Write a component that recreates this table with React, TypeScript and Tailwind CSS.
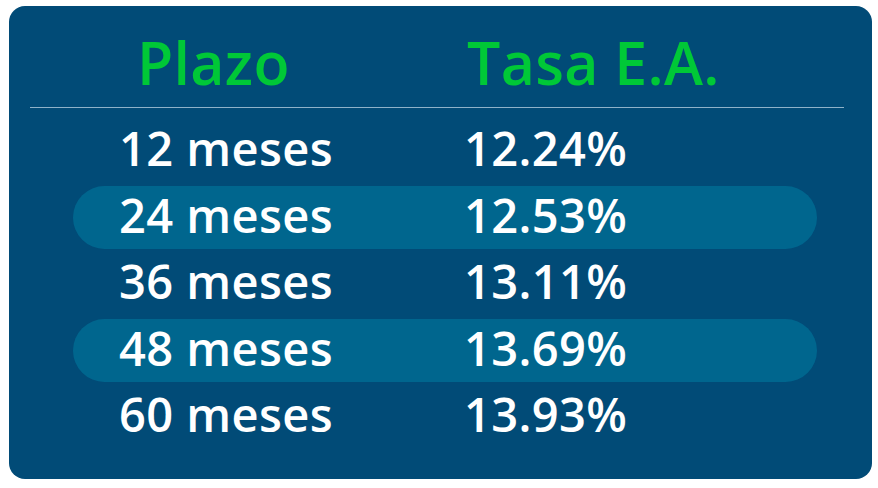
const rows = [
  { plazo: "12 meses", tasa: "12.24%" },
  { plazo: "24 meses", tasa: "12.53%" },
  { plazo: "36 meses", tasa: "13.11%" },
  { plazo: "48 meses", tasa: "13.69%" },
  { plazo: "60 meses", tasa: "13.93%" },
];

export default function App() {
  return (
    <div className="min-h-screen bg-white pt-[6px] pl-[9px]">
      <div
        className="w-[863px] h-[473px] rounded-[16px] bg-[#014b77] pl-[21px] pr-[28px]"
        style={{ fontFamily: '"Open Sans", "Noto Sans", sans-serif' }}
      >
        <div className="grid grid-cols-[330px_1fr] pl-[107px] pt-[20px] h-[102px] border-b border-[#8fb2c9] text-[59px] font-semibold leading-[72px] tracking-[0.3px] text-[#00c837]">
          <span>Plazo</span>
          <span>Tasa E.A.</span>
        </div>
        <div className="flex flex-col gap-[3.5px] pt-[11px] pl-[43px]">
          {rows.map((r, i) => (
            <div
              key={r.plazo}
              className={
                "grid grid-cols-[345px_1fr] items-center h-[63px] w-[744px] rounded-full pl-[46px] pb-[4px] text-[47px] font-semibold leading-none tracking-[0.4px] text-white " +
                (i % 2 === 1 ? "bg-[#00668e]" : "")
              }
            >
              <span>{r.plazo}</span>
              <span>{r.tasa}</span>
            </div>
          ))}
        </div>
      </div>
    </div>
  );
}
